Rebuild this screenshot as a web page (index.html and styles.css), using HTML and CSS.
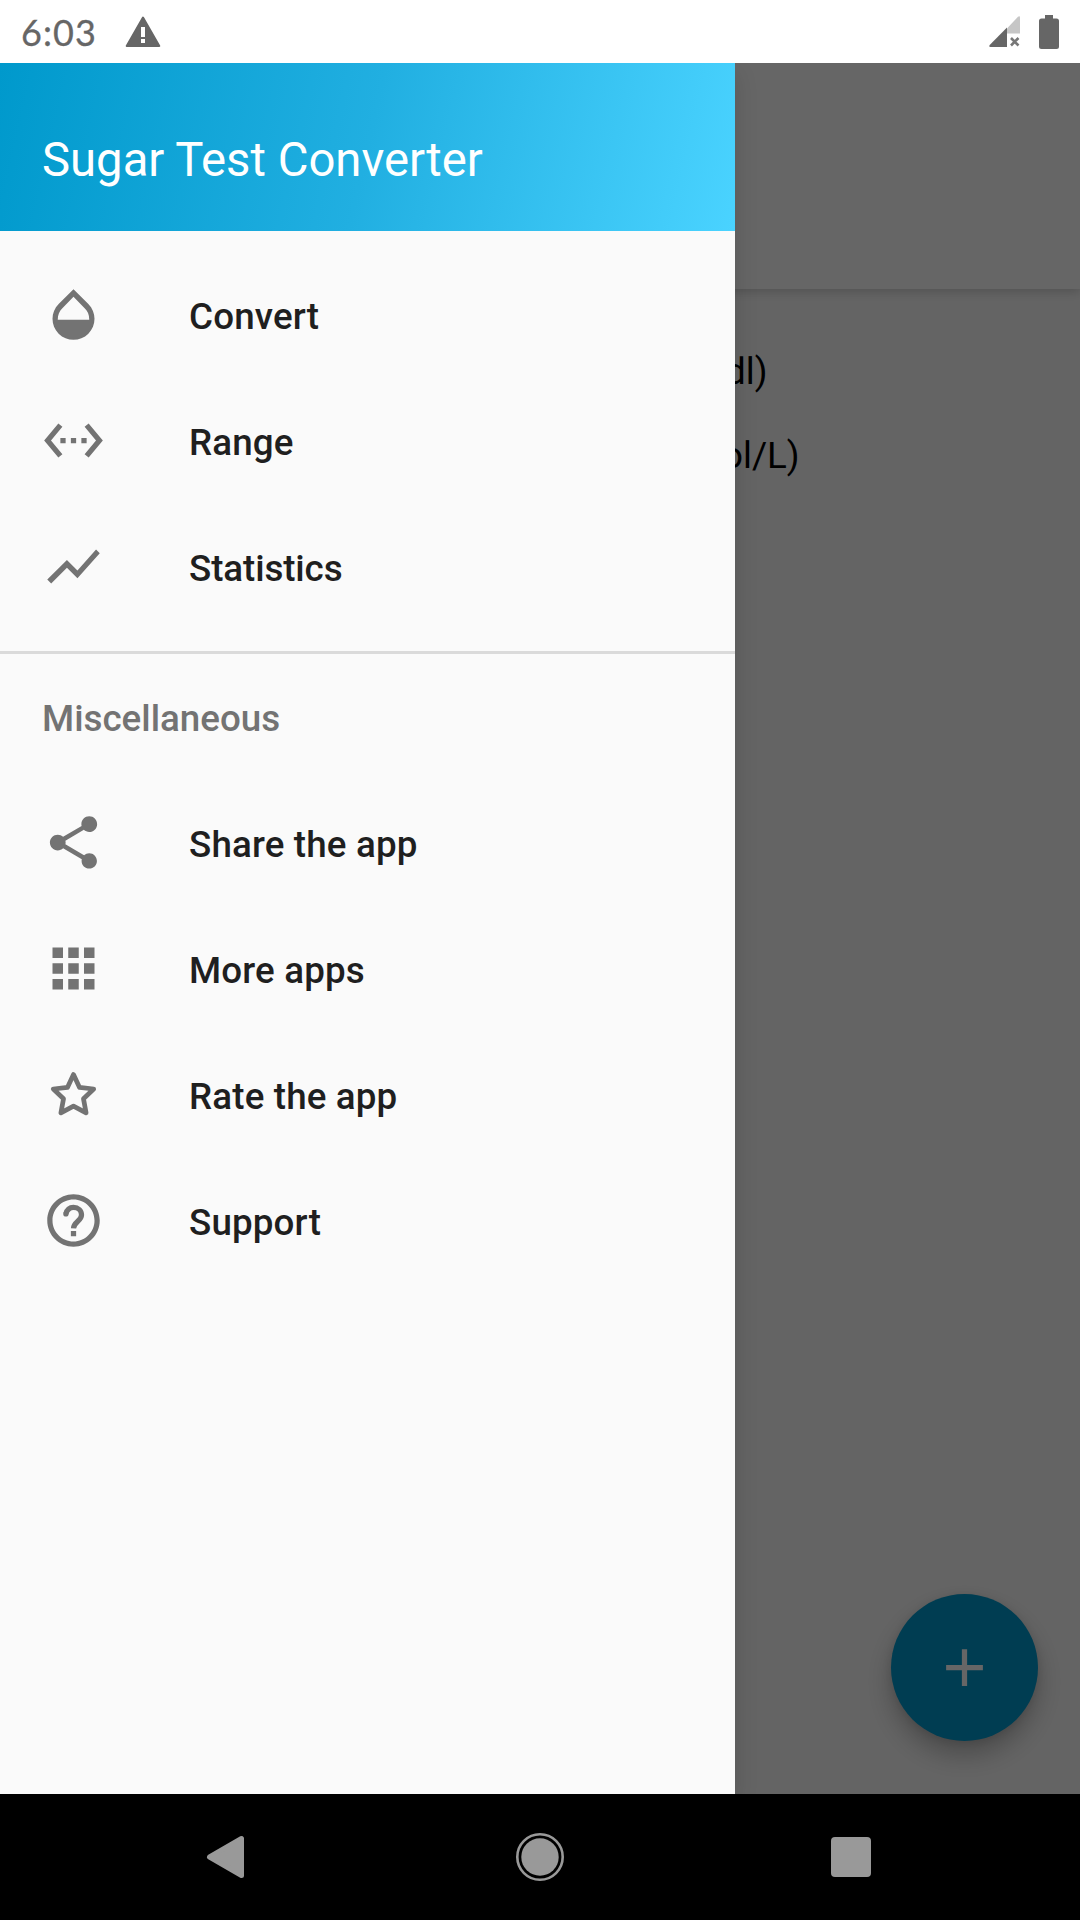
FILE: index.html
```html
<!DOCTYPE html>
<html lang="en">

<head>
  <meta charset="UTF-8">
  <meta name="viewport" content="width=device-width, initial-scale=1.0">
  <title>Sugar Test Converter</title>
  <link rel="stylesheet" href="styles.css">
</head>

<body>
  <!-- Status bar -->
  <header class="status-bar">
    <div class="status-left">
      <span class="clock">6:03</span>
      <svg class="warning" viewBox="0 0 36 32">
        <path d="M18 1.5L34.3 30H1.7z" fill="#666" stroke="#666" stroke-width="2" stroke-linejoin="round"/>
        <path d="M16 11h4v10h-4zM16 23h4v4h-4z" fill="#fff"/>
      </svg>
    </div>
    <div class="status-right">
      <svg class="signal" viewBox="0 0 31 31">
        <path d="M18 12.5L29 .7Q31 -.5 31 1.5V17.5H18z" fill="#c6c6c6"/>
        <path d="M18 11.5V31H1.5Q-.5 31 .7 29z" fill="#666"/>
        <path d="M22 22l7.5 7.5M29.5 22L22 29.5" stroke="#777" stroke-width="2.6"/>
      </svg>
      <svg class="battery" viewBox="0 0 20 34">
        <path d="M6 0h8v3.5h3.5Q20 3.5 20 6v25.5Q20 34 17.5 34h-15Q0 34 0 31.5V6Q0 3.5 2.500 3.5H6z" fill="#666"/>
      </svg>
    </div>
  </header>

  <div class="screen">
    <!-- Page behind the drawer -->
    <div class="page">
      <div class="app-bar"></div>
      <div class="units">
        <p class="unit unit-mg">dl)</p>
        <p class="unit unit-mmol">ol/L)</p>
      </div>
      <button class="fab" aria-label="Add">
        <svg viewBox="0 0 24 24"><path d="M19 13h-6v6h-2v-6H5v-2h6V5h2v6h6v2z"/></svg>
      </button>
    </div>
    <div class="scrim"></div>

    <!-- Drawer -->
    <nav class="drawer">
      <div class="drawer-header">
        <h1>Sugar Test Converter</h1>
      </div>

      <ul class="menu">
        <li>
          <svg viewBox="0 0 24 24"><path d="M17.66 8L12 2.35 6.34 8C4.78 9.56 4 11.64 4 13.64s.78 4.11 2.34 5.67 3.61 2.35 5.66 2.35 4.1-.79 5.66-2.35S20 15.64 20 13.64 19.22 9.56 17.66 8zM6 14c.01-2 .62-3.27 1.76-4.4L12 5.27l4.24 4.38C17.38 10.77 17.99 12 18 14H6z"/></svg>
          <span>Convert</span>
        </li>
        <li>
          <svg viewBox="0 0 24 24"><path d="M7.77 6.76L6.23 5.48.82 12l5.41 6.52 1.54-1.28L3.42 12l4.35-5.24zM7 13h2v-2H7v2zm10-2h-2v2h2v-2zm-6 2h2v-2h-2v2zm6.77-7.52l-1.54 1.28L20.58 12l-4.35 5.24 1.54 1.28L23.18 12l-5.41-6.52z"/></svg>
          <span>Range</span>
        </li>
        <li>
          <svg viewBox="0 0 24 24"><path d="M3.5 18.49l6-6.01 4 4L22 6.92l-1.41-1.41-7.09 7.97-4-4L2 16.99z"/></svg>
          <span class="tight">Statistics</span>
        </li>
      </ul>

      <h2 class="menu-title">Miscellaneous</h2>

      <ul class="menu menu-misc">
        <li>
          <svg viewBox="0 0 24 24"><path d="M18 16.08c-.76 0-1.44.3-1.96.77L8.91 12.7c.05-.23.09-.46.09-.7s-.04-.47-.09-.7l7.05-4.11c.54.5 1.25.81 2.04.81 1.66 0 3-1.34 3-3s-1.34-3-3-3-3 1.34-3 3c0 .24.04.47.09.7L8.04 9.81C7.5 9.31 6.79 9 6 9c-1.66 0-3 1.34-3 3s1.34 3 3 3c.79 0 1.5-.31 2.04-.81l7.12 4.16c-.05.21-.08.43-.08.65 0 1.61 1.31 2.92 2.92 2.92s2.92-1.31 2.92-2.92-1.31-2.92-2.92-2.92z"/></svg>
          <span>Share the app</span>
        </li>
        <li>
          <svg viewBox="0 0 24 24"><path d="M4 8h4V4H4v4zm6 12h4v-4h-4v4zm-6 0h4v-4H4v4zm0-6h4v-4H4v4zm6 0h4v-4h-4v4zm6-10v4h4V4h-4zm-6 4h4V4h-4v4zm6 6h4v-4h-4v4zm0 6h4v-4h-4v4z"/></svg>
          <span>More apps</span>
        </li>
        <li>
          <svg class="outline" viewBox="0 0 24 24"><path d="M12 4.4L14.3 9.3L19.7 9.9L15.8 13.6L16.8 19L12 16.4L7.2 19L8.2 13.6L4.3 9.9L9.7 9.3z"/></svg>
          <span>Rate the app</span>
        </li>
        <li>
          <svg viewBox="0 0 24 24">
            <path d="M11 18h2v-2h-2v2zm1-16C6.48 2 2 6.48 2 12s4.48 10 10 10 10-4.48 10-10S17.52 2 12 2zm0 18c-4.41 0-8-3.59-8-8s3.59-8 8-8 8 3.59 8 8-3.59 8-8 8z"/>
            <path class="hook" d="M9.100 9.500C9.500 7.900 10.600 7 12 7c1.800 0 3.050 1.250 3.050 2.900 0 2.300-3 2.700-3.050 5.100"/>
            <circle cx="9.100" cy="9.500" r="1"/>
          </svg>
          <span>Support</span>
        </li>
      </ul>
    </nav>
  </div>

  <!-- Navigation bar -->
  <footer class="nav-bar">
    <svg viewBox="0 0 60 60"><path d="M10.5 30L42.5 11.5V48.5z" stroke="#999" stroke-width="5" stroke-linejoin="round"/></svg>
    <svg viewBox="0 0 60 60"><circle cx="30" cy="30" r="18.7"/><circle class="ring" cx="30" cy="30" r="22.7"/></svg>
    <svg viewBox="0 0 60 60"><rect x="10" y="10" width="40" height="40" rx="4"/></svg>
  </footer>
</body>

</html>
```

FILE: styles.css
```css
* {
  box-sizing: border-box;
  margin: 0;
  padding: 0;
}

body {
  display: flex;
  flex-direction: column;
  width: 1080px;
  height: 1920px;
  overflow: hidden;
  background: #fff;
  font-family: Roboto, sans-serif;
}

svg {
  display: block;
}

/* Status bar */
.status-bar {
  display: flex;
  justify-content: space-between;
  height: 63px;
  padding: 0 21px;
}

.status-left {
  display: flex;
  align-items: center;
  gap: 28px;
}

.clock {
  color: #666;
  font-family: Lato, sans-serif;
  font-size: 36px;
  letter-spacing: 1.1px;
  line-height: 63px;
  padding-top: 1px;
  -webkit-text-stroke: 0.3px #666;
}

.warning {
  width: 36px;
  height: 32px;
}

.status-right {
  display: flex;
  align-items: center;
  gap: 19px;
}

.signal {
  width: 31px;
  height: 31px;
}

.battery {
  width: 20px;
  height: 34px;
}

/* Screen */
.screen {
  position: relative;
  flex: 1;
  overflow: hidden;
}

.page {
  height: 100%;
  background: #fafafa;
}

.app-bar {
  height: 226px;
  background: #fff;
  box-shadow: 0 3px 10px rgba(0, 0, 0, 0.18);
}

.units {
  padding: 41px 0 0 722px;
}

.unit {
  color: #000;
  font-size: 36.75px;
  line-height: 84px;
}

.unit-mg {
  padding-left: 3px;
}

.fab {
  position: absolute;
  right: 42px;
  bottom: 53px;
  display: flex;
  align-items: center;
  justify-content: center;
  width: 147px;
  height: 147px;
  border: none;
  border-radius: 50%;
  background: #0099cc;
  box-shadow: 0 14px 26px rgba(0, 0, 0, 0.25), 0 2px 10px rgba(0, 0, 0, 0.1);
}

.fab svg {
  width: 63px;
  height: 63px;
  fill: #fff;
}

.scrim {
  position: absolute;
  inset: 0;
  background: rgba(0, 0, 0, 0.6);
}

/* Drawer */
.drawer {
  position: absolute;
  top: 0;
  left: 0;
  width: 735px;
  height: 100%;
  background: #fafafa;
  box-shadow: 0 10px 22px rgba(0, 0, 0, 0.14);
}

.drawer-header {
  display: flex;
  align-items: center;
  height: 168px;
  padding: 26px 42px 0;
  background: linear-gradient(102.9deg, #0099cc, #21afe1 50%, #4ad3ff);
}

.drawer-header h1 {
  color: #fff;
  font-size: 47.25px;
  font-weight: 400;
}

.menu {
  list-style: none;
  padding: 21px 0;
}

.menu li {
  display: flex;
  align-items: center;
  gap: 84px;
  height: 126px;
  padding: 0 42px;
  color: #1f1f1f;
  font-size: 36.75px;
  font-weight: 500;
}

.menu span {
  padding-top: 2px;
  letter-spacing: 0.15px;
}

.menu .tight {
  letter-spacing: -0.1px;
}

.menu svg {
  width: 63px;
  height: 63px;
  margin-bottom: 2px;
  fill: #737373;
}

.menu .outline,
.menu .hook {
  fill: none;
  stroke: #737373;
  stroke-width: 1.8;
  stroke-linejoin: round;
}

.menu .hook {
  stroke-width: 2;
}

.menu-title {
  height: 129px;
  padding: 2px 42px 0;
  border-top: 3px solid #dadada;
  color: #737373;
  font-size: 36.75px;
  font-weight: 500;
  line-height: 126px;
}

.menu-misc {
  padding: 0;
}

/* Navigation bar */
.nav-bar {
  display: grid;
  grid-template-columns: repeat(3, 311px);
  place-content: center;
  justify-items: center;
  height: 126px;
  background: #000;
}

.nav-bar svg {
  width: 60px;
  height: 60px;
  fill: #999;
}

.nav-bar .ring {
  fill: none;
  stroke: #999;
  stroke-width: 2.6;
}
```
